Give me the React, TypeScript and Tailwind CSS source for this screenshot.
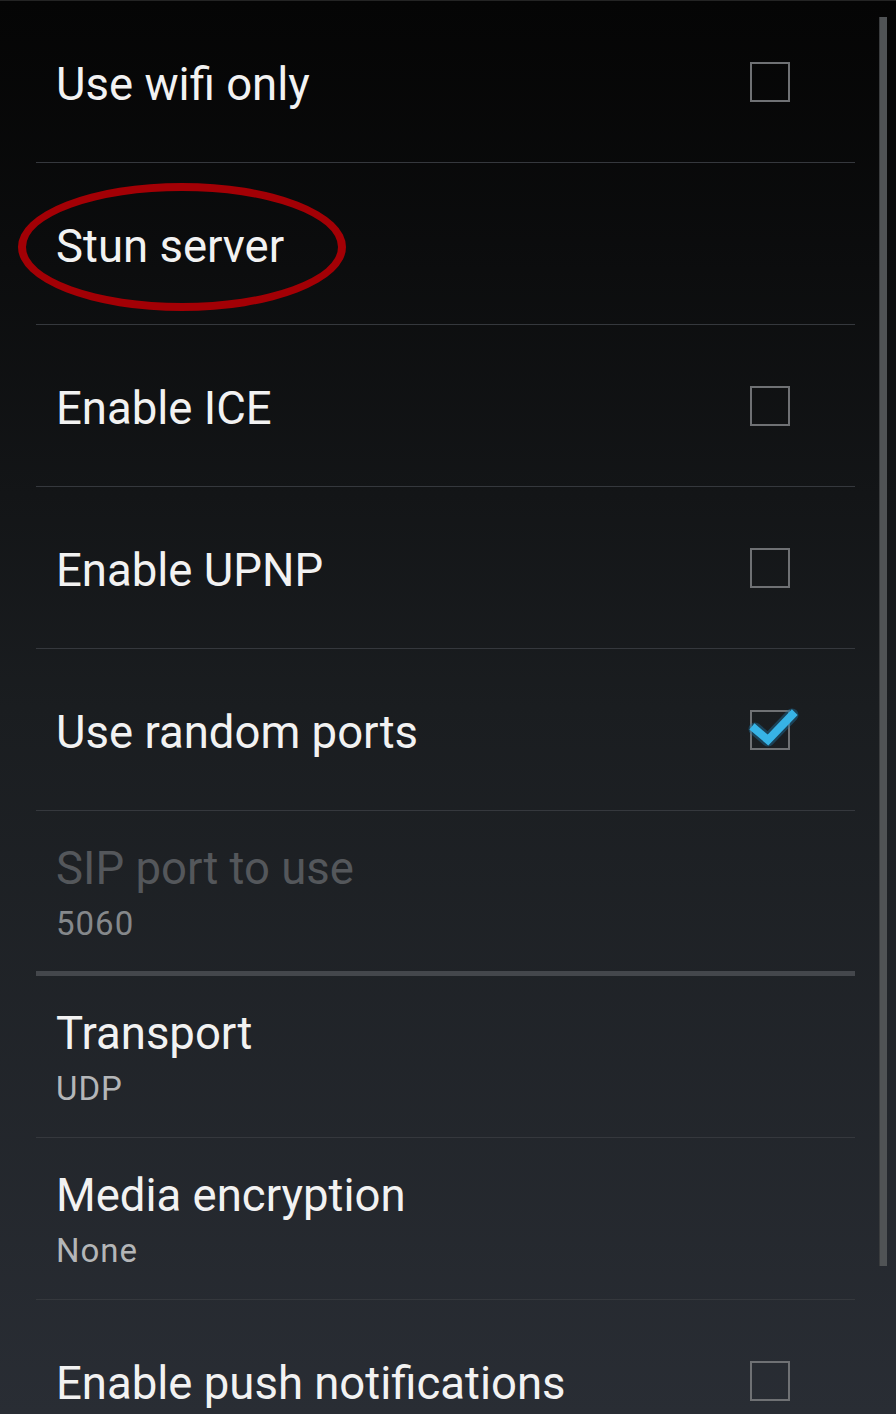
import React from "react";

type Pref = {
  title: string;
  summary?: string;
  check?: boolean;
  checked?: boolean;
  disabled?: boolean;
  circled?: boolean;
  thick?: boolean;
};

const prefs: Pref[] = [
  { title: "Use wifi only", check: true },
  { title: "Stun server", circled: true },
  { title: "Enable ICE", check: true },
  { title: "Enable UPNP", check: true },
  { title: "Use random ports", check: true, checked: true },
  { title: "SIP port to use", summary: "5060", disabled: true, thick: true },
  { title: "Transport", summary: "UDP" },
  { title: "Media encryption", summary: "None" },
  { title: "Enable push notifications", check: true },
];

const CheckBox = ({ checked }: { checked?: boolean }) => (
  <div className="relative w-[40px] h-[40px] border-2 border-[#6f7174]">
    {checked && (
      <svg
        className="absolute left-[-4px] top-[-22px] overflow-visible"
        width="52"
        height="56"
        viewBox="0 0 52 56"
      >
        <path
          d="M7 39 L20 50 L44 25"
          fill="none"
          stroke="#1f6f9a"
          strokeWidth="13"
          strokeLinecap="round"
          strokeLinejoin="round"
          opacity="0.45"
        />
        <path
          d="M7 39 L20 50 L44 25"
          fill="none"
          stroke="#37b3e6"
          strokeWidth="8"
          strokeLinecap="square"
          strokeLinejoin="miter"
        />
      </svg>
    )}
  </div>
);

const Row = ({ p }: { p: Pref }) => (
  <div
    className={`relative flex items-center shrink-0 pl-[20px] pr-[65px] ${
      p.thick
        ? "h-[165px] border-b-[5px] border-[#44474c]"
        : "h-[162px] border-b border-[#35383d]"
    }`}
  >
    {p.circled && (
      <div className="absolute left-[-18px] top-[20px] w-[328px] h-[128px] rounded-[50%] border-[8px] border-[#a30005]" />
    )}
    <div className={`flex-1 flex flex-col ${p.summary ? "pt-[4px]" : "pt-[6px]"}`}>
      <div
        className={`relative text-[45.5px] leading-[52px] ${
          p.disabled ? "text-[#54575b]" : "text-[#f2f2f2]"
        }`}
      >
        {p.title}
      </div>
      {p.summary && (
        <div
          className={`text-[33px] leading-[40px] tracking-[1px] mt-[9px] ${
            p.disabled ? "text-[#85888b]" : "text-[#b4b6b8]"
          }`}
        >
          {p.summary}
        </div>
      )}
    </div>
    {p.check && <CheckBox checked={p.checked} />}
  </div>
);

export default function App() {
  return (
    <div
      className="relative w-[896px] h-[1414px] overflow-hidden bg-gradient-to-b from-[#050505] via-[#1a1d20] to-[#292d34] border-t border-[#242424]"
      style={{ fontFamily: "Roboto, 'Noto Sans', sans-serif" }}
    >
      <div className="ml-[36px] w-[819px] flex flex-col">
        {prefs.map((p) => (
          <Row key={p.title} p={p} />
        ))}
      </div>
      <div className="absolute left-[879px] top-[16px] w-[8px] h-[1249px] bg-[#505355] border-l border-[#3a3c3e]" />
    </div>
  );
}
